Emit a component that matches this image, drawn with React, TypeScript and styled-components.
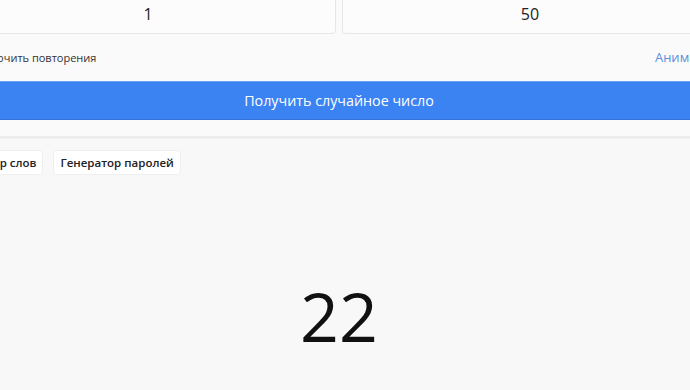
import styled, { createGlobalStyle } from "styled-components";

const GlobalStyle = createGlobalStyle`
  body {
    margin: 0;
    background: #f8f8f8;
    overflow: hidden;
    font-family: "Open Sans", "Noto Sans", sans-serif;
    color: #222;
  }
`;

const Page = styled.div`
  width: 758px;
  margin-left: -40px;
  margin-top: -20px;
`;

const Card = styled.div`
  background: #fafafa;
  margin: 0 -16px;
  padding: 14px 16px 16px;
  box-shadow: 0 1px 2px rgba(0, 0, 0, 0.08);
  border-bottom: 1px solid #ececec;
`;

const Inputs = styled.div`
  display: grid;
  grid-template-columns: 1fr 1fr;
  gap: 6px;
`;

const NumberInput = styled.input`
  height: 40px;
  box-sizing: border-box;
  border: 1px solid #e6e6e6;
  border-radius: 4px;
  background: #fcfcfc;
  text-align: center;
  font-family: inherit;
  font-size: 16px;
  color: #222;
  outline: none;
`;

const OptionsRow = styled.div`
  display: flex;
  align-items: center;
  justify-content: space-between;
  height: 20px;
  margin: 13px 0 14px;
`;

const CheckLabel = styled.label`
  display: flex;
  align-items: center;
  gap: 6px;
  margin-left: -10px;
  font-size: 11px;
  color: #333;
`;

const LinkButton = styled.a`
  font-size: 13px;
  color: #5a8fdc;
  margin-right: -2px;
  cursor: pointer;
`;

const MainButton = styled.button`
  width: 100%;
  height: 39px;
  border: none;
  border-top: 1px solid #6aa2f5;
  border-bottom: 1px solid #3474db;
  border-radius: 4px;
  background: #3b82f3;
  color: #fff;
  font-family: inherit;
  font-size: 14.3px;
`;

const Tabs = styled.div`
  display: flex;
  gap: 10px;
  margin: 13px 0 0 -21px;
`;

const Tab = styled.button`
  height: 25px;
  padding: 0 6px;
  border: 1px solid #efefef;
  border-radius: 4px;
  background: #fff;
  font-family: inherit;
  font-size: 11.5px;
  font-weight: 600;
  color: #222;
`;

const Result = styled.div`
  margin-top: 101px;
  text-align: center;
  font-size: 68px;
  font-weight: 500;
  line-height: 80px;
  color: #111;
`;

const App = () => {
  return (
    <>
      <GlobalStyle />
      <Page>
        <Card>
          <Inputs>
            <NumberInput defaultValue="1" />
            <NumberInput defaultValue="50" />
          </Inputs>
          <OptionsRow>
            <CheckLabel>
              <input type="checkbox" style={{ margin: 0 }} />
              Исключить повторения
            </CheckLabel>
            <LinkButton>Анимация</LinkButton>
          </OptionsRow>
          <MainButton>Получить случайное число</MainButton>
        </Card>
        <Tabs>
          <Tab>Генератор слов</Tab>
          <Tab>Генератор паролей</Tab>
        </Tabs>
        <Result>22</Result>
      </Page>
    </>
  );
};

export default App;
